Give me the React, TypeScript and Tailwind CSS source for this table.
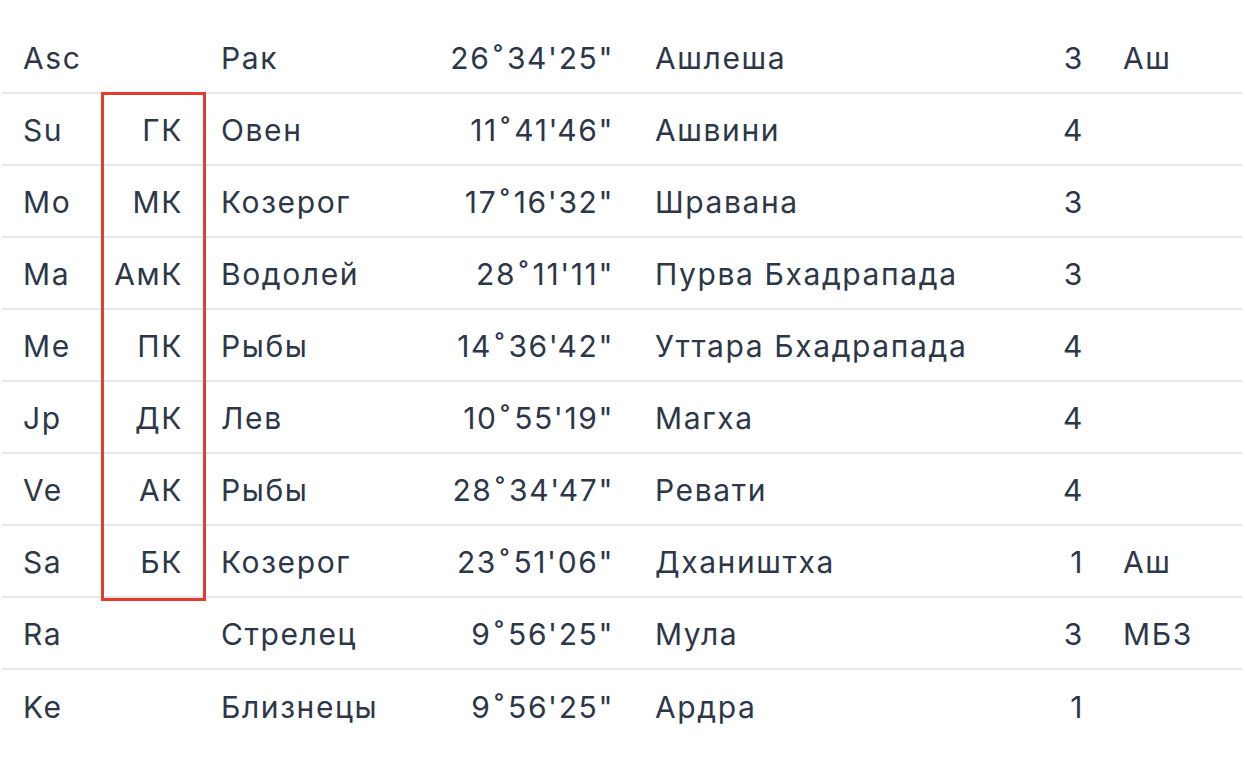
import React from "react";

const rows = [
  ["Asc", "", "Рак", "26", "34'25\"", "Ашлеша", "3", "Аш"],
  ["Su", "ГК", "Овен", "11", "41'46\"", "Ашвини", "4", ""],
  ["Mo", "МК", "Козерог", "17", "16'32\"", "Шравана", "3", ""],
  ["Ma", "АмК", "Водолей", "28", "11'11\"", "Пурва Бхадрапада", "3", ""],
  ["Me", "ПК", "Рыбы", "14", "36'42\"", "Уттара Бхадрапада", "4", ""],
  ["Jp", "ДК", "Лев", "10", "55'19\"", "Магха", "4", ""],
  ["Ve", "АК", "Рыбы", "28", "34'47\"", "Ревати", "4", ""],
  ["Sa", "БК", "Козерог", "23", "51'06\"", "Дхаништха", "1", "Аш"],
  ["Ra", "", "Стрелец", "9", "56'25\"", "Мула", "3", "МБЗ"],
  ["Ke", "", "Близнецы", "9", "56'25\"", "Ардра", "1", ""],
];

export default function App() {
  return (
    <div
      className="w-[1246px] h-[776px] bg-white pt-[22px] pl-[2px] text-[#2d3748] text-[30px] leading-none tracking-[1.6px]"
      style={{ fontFamily: 'Inter, "Liberation Sans", sans-serif' }}
    >
      <div className="relative w-[1240px]">
        {rows.map((r, i) => (
          <div
            key={i}
            className={`grid grid-cols-[99px_104px_220px_207px_408px_62px_140px] h-[72px] items-center pt-[2px] ${
              i < rows.length - 1 ? "border-b-2 border-[#e5e7eb]" : ""
            }`}
          >
            <div className="pl-[21px]">{r[0]}</div>
            <div className="pr-[22px] text-right">{r[1]}</div>
            <div className="pl-[16px]">{r[2]}</div>
            <div className="pr-[18px] text-right">
              {r[3]}
              <span className="mx-[3px]">˚</span>
              {r[4]}
            </div>
            <div className="pl-[23px]">{r[5]}</div>
            <div className="pr-[18px] text-right">{r[6]}</div>
            <div className="pl-[21px]">{r[7]}</div>
          </div>
        ))}
        <div className="absolute left-[99px] top-[70px] w-[105px] h-[509px] border-[3px] border-[#e53a2e] pointer-events-none" />
      </div>
    </div>
  );
}
